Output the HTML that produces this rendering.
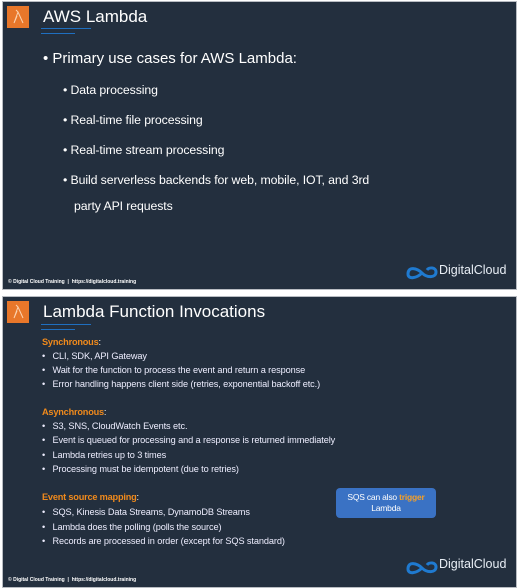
<!DOCTYPE html>
<html><head><style>
body{margin:0;width:518px;height:588px;background:#fff;position:relative;overflow:hidden;font-family:"Liberation Sans",sans-serif;color:#fff}
.s{position:absolute;left:2px;width:513px;background:#232f3e;border:1px solid #b8bcc2}
.a{position:absolute;white-space:nowrap}
.ic{position:absolute;left:4px;top:4px;width:22px;height:22px;background:#e8772a;}
.ul1{position:absolute;left:38px;width:50px;height:1px;background:#1f6fc0}
.ul2{position:absolute;left:38px;width:34px;height:1px;background:#1f6fc0}
.ft{position:absolute;left:5px;font-size:5px;font-weight:bold}
.b1{font-size:15px}
.b2{font-size:12.3px;letter-spacing:-0.1px}
.t{font-size:9.2px;letter-spacing:-0.1px;color:#eef}
.h{font-size:9.2px;font-weight:bold;color:#f08a1c;letter-spacing:-0.2px}
.logo{position:absolute;font-size:12.5px;color:#e8eef5}
</style></head><body>
<div class="s" style="top:1px;height:287px">
 <div class="ic"><svg width="22" height="22"><path d="M7 17 L11 6 L9 4 M11 6 L16 17 M7 17 L10 10" stroke="#fbd3b0" fill="none" stroke-width="1"/></svg></div>
 <div class="a" style="left:40px;top:5px;font-size:17px">AWS Lambda</div>
 <div class="ul1" style="top:26px"></div><div class="ul2" style="top:31px"></div>
 <div class="a b1" style="left:40px;top:48px">• Primary use cases for AWS Lambda:</div>
 <div class="a b2" style="left:60px;top:81px">• Data processing</div>
 <div class="a b2" style="left:60px;top:111px">• Real-time file processing</div>
 <div class="a b2" style="left:60px;top:141px">• Real-time stream processing</div>
 <div class="a b2" style="left:60px;top:171px">• Build serverless backends for web, mobile, IOT, and 3rd</div>
 <div class="a b2" style="left:71px;top:197px">party API requests</div>
 <div class="ft" style="top:277px">© Digital Cloud Training &nbsp;| &nbsp;https://digitalcloud.training</div>
 <svg style="position:absolute;left:402px;top:262px" width="34" height="16"><path d="M3 10 C3 2 12 4 17 9 C22 14 31 14 31 8 C31 3 24 3 22 6 M17 9 C12 14 3 16 3 10" stroke="#1f7ad0" stroke-width="3" fill="none"/></svg>
 <div class="logo" style="left:436px;top:261px">DigitalCloud</div>
</div>
<div class="s" style="top:296px;height:290px">
 <div class="ic"><svg width="22" height="22"><path d="M7 17 L11 6 L9 4 M11 6 L16 17 M7 17 L10 10" stroke="#fbd3b0" fill="none" stroke-width="1"/></svg></div>
 <div class="a" style="left:40px;top:5px;font-size:17px">Lambda Function Invocations</div>
 <div class="ul1" style="top:27px"></div><div class="ul2" style="top:32px"></div>
 <div class="a h" style="left:39px;top:40px">Synchronous<span style="color:#fff;font-weight:normal">:</span></div>
 <div class="a t" style="left:39px;top:54px">•&nbsp;&nbsp; CLI, SDK, API Gateway</div>
 <div class="a t" style="left:39px;top:68px">•&nbsp;&nbsp; Wait for the function to process the event and return a response</div>
 <div class="a t" style="left:39px;top:82px">•&nbsp;&nbsp; Error handling happens client side (retries, exponential backoff etc.)</div>
 <div class="a h" style="left:39px;top:110px">Asynchronous<span style="color:#fff;font-weight:normal">:</span></div>
 <div class="a t" style="left:39px;top:124px">•&nbsp;&nbsp; S3, SNS, CloudWatch Events etc.</div>
 <div class="a t" style="left:39px;top:138px">•&nbsp;&nbsp; Event is queued for processing and a response is returned immediately</div>
 <div class="a t" style="left:39px;top:153px">•&nbsp;&nbsp; Lambda retries up to 3 times</div>
 <div class="a t" style="left:39px;top:167px">•&nbsp;&nbsp; Processing must be idempotent (due to retries)</div>
 <div class="a h" style="left:39px;top:195px">Event source mapping<span style="color:#fff;font-weight:normal">:</span></div>
 <div class="a t" style="left:39px;top:210px">•&nbsp;&nbsp; SQS, Kinesis Data Streams, DynamoDB Streams</div>
 <div class="a t" style="left:39px;top:225px">•&nbsp;&nbsp; Lambda does the polling (polls the source)</div>
 <div class="a t" style="left:39px;top:239px">•&nbsp;&nbsp; Records are processed in order (except for SQS standard)</div>
 <div style="position:absolute;left:333px;top:191px;width:100px;height:30px;background:#3a72c4;border-radius:4px;text-align:center;font-size:8.5px;line-height:11px;padding-top:4px;box-sizing:border-box;letter-spacing:-0.2px">SQS can also <b style="color:#f5a028">trigger</b><br>Lambda</div>
 <div class="ft" style="top:280px">© Digital Cloud Training &nbsp;| &nbsp;https://digitalcloud.training</div>
 <svg style="position:absolute;left:402px;top:262px" width="34" height="16"><path d="M3 10 C3 2 12 4 17 9 C22 14 31 14 31 8 C31 3 24 3 22 6 M17 9 C12 14 3 16 3 10" stroke="#1f7ad0" stroke-width="3" fill="none"/></svg>
 <div class="logo" style="left:436px;top:260px">DigitalCloud</div>
</div>
</body></html>
